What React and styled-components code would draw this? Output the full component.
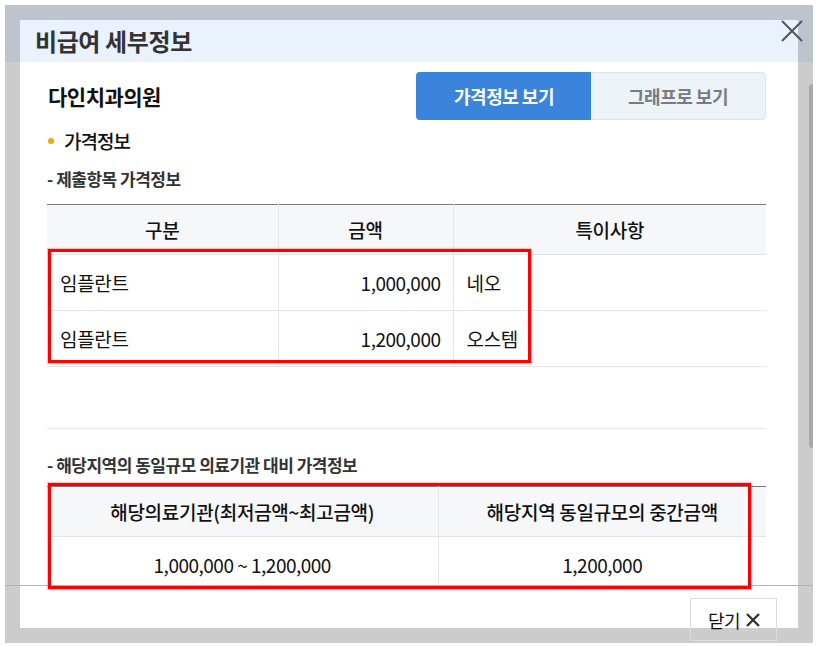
import React from "react";
import styled, { createGlobalStyle } from "styled-components";

const GlobalStyle = createGlobalStyle`
  html, body { margin: 0; padding: 0; background: #ffffff; }
  body { font-family: "Noto Sans CJK KR", "Noto Sans", sans-serif; color: #111; }
  * { box-sizing: border-box; }
`;

const Page = styled.div`
  width: 820px;
  height: 646px;
  padding: 5px 7px 3px 5px;
`;

const Frame = styled.div`
  position: relative;
  width: 808px;
  height: 638px;
  padding: 15px 15px 15px 15px;
  background: linear-gradient(#bdc4cd 0 57px, #cccccc 57px);
`;

const Modal = styled.div`
  width: 778px;
  height: 608px;
  background: #ffffff;
  display: flex;
  flex-direction: column;
`;

const Header = styled.div`
  height: 42px;
  flex: none;
  background: #eaf2fd;
  display: flex;
  align-items: center;
  padding-left: 15px;
`;

const Title = styled.h1`
  margin: 0;
  font-size: 24px;
  font-weight: 700;
  color: #333;
  letter-spacing: -0.4px;
  line-height: 30px;
`;

const CloseIcon = styled.button`
  position: absolute;
  top: 15px;
  right: 10px;
  width: 22px;
  height: 22px;
  padding: 0;
  border: 0;
  background: transparent;
  cursor: pointer;
  svg { display: block; }
`;

const Body = styled.div`
  flex: 1 1 0;
  min-height: 0;
  padding: 10px 32px 0 27px;
`;

const NameRow = styled.div`
  display: flex;
  align-items: center;
  justify-content: space-between;
`;

const Hospital = styled.h2`
  margin: 0 0 0 1px;
  font-size: 21px;
  font-weight: 700;
  color: #111;
  letter-spacing: -0.5px;
`;

const Toggle = styled.div`
  display: flex;
  width: 350px;
  height: 48px;
`;

const ToggleButton = styled.button`
  flex: 1;
  height: 100%;
  border: 1px solid ${(p) => (p.$active ? "#3a84dc" : "#dfe5ec")};
  ${(p) => (p.$active ? "border-right: 0;" : "border-left: 0;")}
  border-radius: ${(p) => (p.$active ? "4px 0 0 4px" : "0 4px 4px 0")};
  background: ${(p) => (p.$active ? "#3a84dc" : "#eef3f8")};
  color: ${(p) => (p.$active ? "#ffffff" : "#777c82")};
  font-family: inherit;
  font-size: 18px;
  font-weight: 700;
  letter-spacing: -0.5px;
  cursor: pointer;
`;

const Section = styled.h3`
  margin: 8px 0 0 1px;
  display: flex;
  align-items: center;
  gap: 10px;
  font-size: 19px;
  line-height: 26px;
  font-weight: 500;
  color: #111;
  letter-spacing: -1px;
  &::before {
    content: "";
    width: 6px;
    height: 6px;
    border-radius: 50%;
    background: #f5a40c;
  }
`;

const SubTitle = styled.h4`
  margin: ${(p) => p.$mt} 0 0 0;
  font-size: 17px;
  font-weight: 700;
  color: #333;
  letter-spacing: -0.5px;
  line-height: 22px;
`;

const TableWrap = styled.div`
  position: relative;
  margin-top: ${(p) => p.$mt};
`;

const Table = styled.table`
  width: 719px;
  border-collapse: collapse;
  table-layout: fixed;
  border-top: 1px solid #777;
`;

const Th = styled.th`
  height: 50px;
  padding: 0;
  background: #f6f7f9;
  font-size: 19px;
  font-weight: 500;
  color: #111;
  text-align: center;
  letter-spacing: -0.3px;
  border-bottom: 1px solid #e3e3e3;
  & + & { border-left: 1px solid #e6e6e6; }
`;

const Td = styled.td`
  height: 56px;
  font-size: 19px;
  font-weight: 400;
  color: #111;
  text-align: ${(p) => p.$align || "left"};
  padding: 0 ${(p) => (p.$align === "right" ? "12px" : "0")} 0 ${(p) => (!p.$align ? "13px" : "0")};
  letter-spacing: ${(p) => (p.$num ? "-0.5px" : "-0.3px")};
  border-bottom: 1px solid #e6e6e6;
  & + & { border-left: 1px solid #e6e6e6; }
`;

const Spacer = styled.div`
  height: 62px;
  border-bottom: 1px solid #e6e6e6;
`;

const Highlight = styled.div`
  position: absolute;
  z-index: 3;
  left: ${(p) => p.$left}px;
  top: ${(p) => p.$top}px;
  width: ${(p) => p.$width}px;
  height: ${(p) => p.$height}px;
  border: 3px solid #ff0000;
  box-shadow: 0 0 1px 1px rgba(255, 80, 80, 0.35);
  pointer-events: none;
`;

const FooterLine = styled.div`
  position: absolute;
  z-index: 2;
  left: 0;
  right: 0;
  top: 580px;
  height: 1px;
  background: #b3b3b3;
`;

const Footer = styled.div`
  position: relative;
  z-index: 1;
  height: 43px;
  flex: none;
  display: flex;
  justify-content: flex-end;
  align-items: flex-start;
  padding: 13px 21px 0 0;
  background: #ffffff;
`;

const CloseButton = styled.button`
  display: flex;
  align-items: center;
  gap: 5px;
  height: 43px;
  padding: 0 15px 0 17px;
  border: 1px solid #dcdcdc;
  background: transparent;
  font-family: inherit;
  font-size: 18px;
  color: #111;
  letter-spacing: -0.5px;
  cursor: pointer;
`;

const ScrollThumb = styled.div`
  position: absolute;
  right: 0;
  top: 79px;
  width: 4px;
  height: 364px;
  border-radius: 3px 0 0 3px;
  background: #a9a9a9;
`;

export default function App() {
  return (
    <Page>
      <GlobalStyle />
      <Frame>
        <Modal>
          <Header>
            <Title>비급여 세부정보</Title>
          </Header>
          <Body>
            <NameRow>
              <Hospital>다인치과의원</Hospital>
              <Toggle>
                <ToggleButton $active>가격정보 보기</ToggleButton>
                <ToggleButton>그래프로 보기</ToggleButton>
              </Toggle>
            </NameRow>
            <Section>가격정보</Section>
            <SubTitle $mt="14px">- 제출항목 가격정보</SubTitle>
            <TableWrap $mt="14px">
              <Table>
                <colgroup>
                  <col style={{ width: 231 }} />
                  <col style={{ width: 175 }} />
                  <col style={{ width: 313 }} />
                </colgroup>
                <thead>
                  <tr>
                    <Th>구분</Th>
                    <Th>금액</Th>
                    <Th>특이사항</Th>
                  </tr>
                </thead>
                <tbody>
                  <tr>
                    <Td>임플란트</Td>
                    <Td $align="right" $num>1,000,000</Td>
                    <Td>네오</Td>
                  </tr>
                  <tr>
                    <Td>임플란트</Td>
                    <Td $align="right" $num>1,200,000</Td>
                    <Td>오스템</Td>
                  </tr>
                </tbody>
              </Table>
              <Highlight $left={1} $top={45} $width={483} $height={114} />
            </TableWrap>
            <Spacer />
            <SubTitle $mt="25px">- 해당지역의 동일규모 의료기관 대비 가격정보</SubTitle>
            <TableWrap $mt="10px">
              <Table>
                <colgroup>
                  <col style={{ width: 391 }} />
                  <col style={{ width: 328 }} />
                </colgroup>
                <thead>
                  <tr>
                    <Th>해당의료기관(최저금액~최고금액)</Th>
                    <Th>해당지역 동일규모의 중간금액</Th>
                  </tr>
                </thead>
                <tbody>
                  <tr>
                    <Td $align="center" $num>1,000,000 ~ 1,200,000</Td>
                    <Td $align="center" $num>1,200,000</Td>
                  </tr>
                </tbody>
              </Table>
              <Highlight $left={1} $top={-3} $width={703} $height={106} />
            </TableWrap>
          </Body>
          <Footer>
            <CloseButton>
              닫기
              <svg width="16" height="16" viewBox="0 0 16 16">
                <path d="M2 2 L14 14 M14 2 L2 14" stroke="#333" strokeWidth="2.4" />
              </svg>
            </CloseButton>
          </Footer>
        </Modal>
        <CloseIcon aria-label="닫기">
          <svg width="22" height="22" viewBox="0 0 22 22">
            <path d="M1 1 L21 21 M21 1 L1 21" stroke="#555" strokeWidth="2" />
          </svg>
        </CloseIcon>
        <FooterLine />
        <ScrollThumb />
      </Frame>
    </Page>
  );
}
